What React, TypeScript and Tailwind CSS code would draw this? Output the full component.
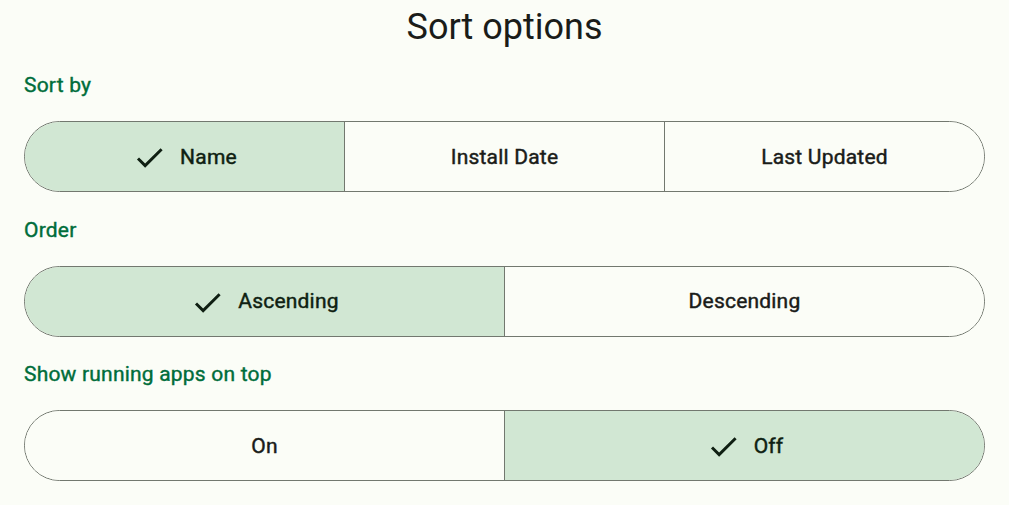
import React, { useState } from "react";

type Option = { id: string; label: string };

const CheckIcon: React.FC = () => (
  <svg className="w-[35px] h-[35px] shrink-0" viewBox="0 0 24 24" fill="currentColor">
    <path d="M9 16.17L4.83 12l-1.42 1.41L9 19 21 7l-1.41-1.41z" />
  </svg>
);

const Segmented: React.FC<{
  options: Option[];
  value: string;
  onChange: (id: string) => void;
}> = ({ options, value, onChange }) => (
  <div className="flex h-[71px] rounded-full border border-[#72786f] overflow-hidden">
    {options.map((opt, i) => {
      const active = opt.id === value;
      return (
        <button
          key={opt.id}
          onClick={() => onChange(opt.id)}
          className={`flex-1 flex items-center justify-center gap-[13px] pt-[2px] text-[21px] font-normal tracking-[0.2px] [-webkit-text-stroke:0.45px_currentColor] ${
            i > 0 ? "border-l border-[#72786f]" : ""
          } ${active ? "bg-[#d1e7d3] text-[#0f1f12]" : "bg-[#fbfdf7] text-[#1a1c19]"}`}
        >
          {active && <CheckIcon />}
          <span>{opt.label}</span>
        </button>
      );
    })}
  </div>
);

const Section: React.FC<{ title: string; children: React.ReactNode }> = ({ title, children }) => (
  <div className="flex flex-col">
    <div className="h-[28px] leading-[28px] text-[21px] font-normal tracking-[0.2px] [-webkit-text-stroke:0.4px_currentColor] text-[#006d3b]">
      {title}
    </div>
    <div className="mt-[22px]">{children}</div>
  </div>
);

const App: React.FC = () => {
  const [sortBy, setSortBy] = useState("name");
  const [order, setOrder] = useState("asc");
  const [runningTop, setRunningTop] = useState("off");

  return (
    <div
      className="w-full h-[505px] bg-[#fbfdf7] px-[24px]"
      style={{ fontFamily: "Roboto, 'Noto Sans', sans-serif" }}
    >
      <h1 className="h-[54px] leading-[54px] text-center text-[36px] text-[#1a1c19]">Sort options</h1>

      <div className="mt-[17px] flex flex-col gap-[23.5px]">
        <Section title="Sort by">
          <Segmented
            value={sortBy}
            onChange={setSortBy}
            options={[
              { id: "name", label: "Name" },
              { id: "install", label: "Install Date" },
              { id: "updated", label: "Last Updated" },
            ]}
          />
        </Section>

        <Section title="Order">
          <Segmented
            value={order}
            onChange={setOrder}
            options={[
              { id: "asc", label: "Ascending" },
              { id: "desc", label: "Descending" },
            ]}
          />
        </Section>

        <Section title="Show running apps on top">
          <Segmented
            value={runningTop}
            onChange={setRunningTop}
            options={[
              { id: "on", label: "On" },
              { id: "off", label: "Off" },
            ]}
          />
        </Section>
      </div>
    </div>
  );
};

export default App;
